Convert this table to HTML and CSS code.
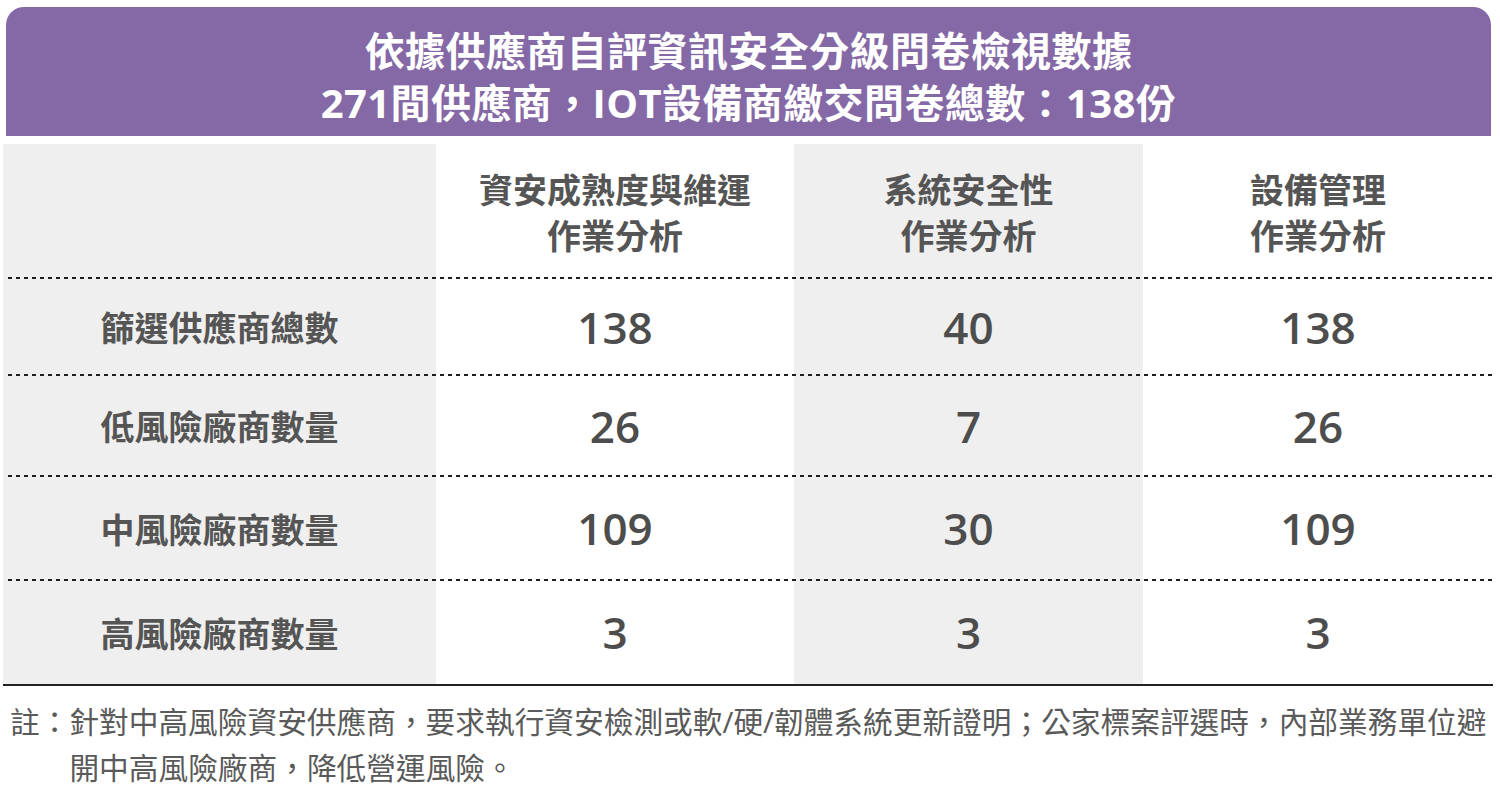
FILE: index.html
```html
<!DOCTYPE html>
<html lang="zh-TW">
<head>
<meta charset="utf-8">
<title>依據供應商自評資訊安全分級問卷檢視數據</title>
<link rel="stylesheet" href="styles.css">
</head>
<body>
<div class="page">
  <header class="banner">
    <h1 class="banner-title">依據供應商自評資訊安全分級問卷檢視數據<br>271間供應商，IOT設備商繳交問卷總數：138份</h1>
  </header>

  <div class="table">
    <div class="row row-head">
      <div class="cell cell-shade"></div>
      <div class="cell cell-title">資安成熟度與維運<br>作業分析</div>
      <div class="cell cell-shade cell-title">系統安全性<br>作業分析</div>
      <div class="cell cell-title">設備管理<br>作業分析</div>
    </div>
    <div class="row row-body row-a">
      <div class="cell cell-shade cell-label">篩選供應商總數</div>
      <div class="cell cell-num">138</div>
      <div class="cell cell-shade cell-num">40</div>
      <div class="cell cell-num">138</div>
    </div>
    <div class="row row-body row-b">
      <div class="cell cell-shade cell-label">低風險廠商數量</div>
      <div class="cell cell-num">26</div>
      <div class="cell cell-shade cell-num">7</div>
      <div class="cell cell-num">26</div>
    </div>
    <div class="row row-body row-c">
      <div class="cell cell-shade cell-label">中風險廠商數量</div>
      <div class="cell cell-num">109</div>
      <div class="cell cell-shade cell-num">30</div>
      <div class="cell cell-num">109</div>
    </div>
    <div class="row row-body row-d">
      <div class="cell cell-shade cell-label">高風險廠商數量</div>
      <div class="cell cell-num">3</div>
      <div class="cell cell-shade cell-num">3</div>
      <div class="cell cell-num">3</div>
    </div>
  </div>

  <p class="note">註：針對中高風險資安供應商，要求執行資安檢測或軟/硬/韌體系統更新證明；公家標案評選時，內部業務單位避開中高風險廠商，降低營運風險。</p>
</div>
</body>
</html>
```

FILE: styles.css
```css
* {
  box-sizing: border-box;
}

html, body {
  margin: 0;
  padding: 0;
  background: #ffffff;
}

body {
  font-family: "Open Sans", "Noto Sans CJK TC", sans-serif;
  color: #555555;
}

.page {
  width: 1500px;
  padding-top: 7px;
}

.banner {
  margin: 0 9px 0 6px;
  height: 129px;
  background: #8569a6;
  border-radius: 18px 18px 0 0;
  padding-top: 18px;
}

.banner-title {
  margin: 0;
  color: #ffffff;
  font-size: 40px;
  line-height: 52px;
  font-weight: 700;
  text-align: center;
  letter-spacing: 0.4px;
}

.table {
  margin: 8px 7px 0 3px;
  border-bottom: 2px solid #222222;
}

.row {
  display: grid;
  grid-template-columns: 433px 358px 349px 350px;
  position: relative;
}

.row-head { height: 134px; }
.row-a { height: 97px; }
.row-b { height: 101px; }
.row-c { height: 104px; }
.row-d { height: 104px; }

.row-body::before {
  content: "";
  position: absolute;
  left: 5px;
  right: 0;
  top: -1px;
  height: 2px;
  background: repeating-linear-gradient(to right, #1e1e1e 0 4px, transparent 4px 8px);
}

.cell {
  display: flex;
  align-items: center;
  justify-content: center;
  text-align: center;
}

.cell-shade {
  background: #efefef;
}

.cell-title {
  font-size: 34px;
  line-height: 46px;
  font-weight: 700;
  color: #555555;
  padding-top: 4px;
}

.cell-label {
  font-size: 34px;
  font-weight: 700;
  color: #555555;
}

.cell-num {
  font-size: 44px;
  font-weight: 600;
  color: #4d4d4d;
}

.note {
  margin: 13px 0 0 0;
  padding-left: calc(10px + 2em);
  text-indent: -2em;
  font-size: 29.7px;
  line-height: 46px;
  font-weight: 400;
  color: #5a5a5a;
}
```
